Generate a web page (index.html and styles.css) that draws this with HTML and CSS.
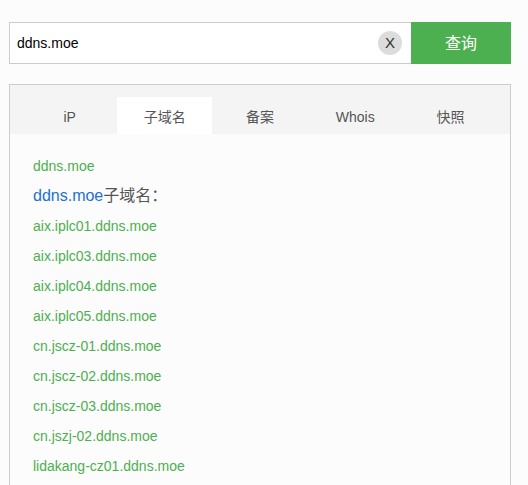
FILE: index.html
```html
<!DOCTYPE html>
<html lang="zh-CN">
<head>
<meta charset="utf-8">
<title>子域名查询</title>
<link rel="stylesheet" href="styles.css">
</head>
<body>
<div class="page">
  <form class="search">
    <div class="field">
      <input class="field-input" type="text" value="ddns.moe">
      <span class="clear">X</span>
    </div>
    <button class="submit" type="button">查询</button>
  </form>
  <div class="panel">
    <ul class="tabs">
      <li class="tab">iP</li>
      <li class="tab active">子域名</li>
      <li class="tab">备案</li>
      <li class="tab">Whois</li>
      <li class="tab">快照</li>
    </ul>
    <div class="content">
      <a class="link">ddns.moe</a>
      <div class="title"><span class="title-domain">ddns.moe</span>子域名：</div>
      <a class="link">aix.iplc01.ddns.moe</a>
      <a class="link">aix.iplc03.ddns.moe</a>
      <a class="link">aix.iplc04.ddns.moe</a>
      <a class="link">aix.iplc05.ddns.moe</a>
      <a class="link">cn.jscz-01.ddns.moe</a>
      <a class="link">cn.jscz-02.ddns.moe</a>
      <a class="link">cn.jscz-03.ddns.moe</a>
      <a class="link">cn.jszj-02.ddns.moe</a>
      <a class="link">lidakang-cz01.ddns.moe</a>
    </div>
  </div>
</div>
</body>
</html>
```

FILE: styles.css
```css
html, body {
  margin: 0;
  padding: 0;
  background: #fcfcfc;
  font-family: "Liberation Sans", "Noto Sans CJK SC", sans-serif;
  overflow: hidden;
}
.page {
  width: 502px;
  padding: 22px 0 0 9px;
}
.search {
  display: flex;
  height: 42px;
  margin: 0;
}
.field {
  flex: 1;
  display: flex;
  align-items: center;
  background: #fff;
  border: 1px solid #ccc;
  border-right: none;
  box-sizing: border-box;
  height: 42px;
}
.field-input {
  flex: 1;
  border: none;
  outline: none;
  background: transparent;
  font-family: "Liberation Sans", "Noto Sans CJK SC", sans-serif;
  font-size: 14px;
  color: #000;
  padding: 0 0 0 7px;
  height: 40px;
  min-width: 0;
}
.clear {
  width: 24px;
  height: 24px;
  border-radius: 50%;
  background: #dcdcdc;
  color: #333;
  font-size: 15px;
  line-height: 24px;
  text-align: center;
  margin-right: 9px;
}
.submit {
  width: 100px;
  height: 42px;
  border: none;
  background: #4caf50;
  color: #fff;
  font-family: "Noto Sans CJK SC", sans-serif;
  font-size: 16px;
  line-height: 40px;
  padding: 0 0 2px;
}
.panel {
  margin-top: 20px;
  border: 1px solid #ccc;
  border-bottom: none;
  background: #fcfcfc;
  height: 420px;
}
.tabs {
  display: flex;
  list-style: none;
  margin: 0;
  padding: 12px 12px 0;
  background: #f4f4f4;
}
.tab {
  flex: 1;
  height: 37px;
  box-sizing: border-box;
  padding-top: 5px;
  line-height: 31px;
  text-align: center;
  font-size: 14px;
  color: #555;
}
.tab.active {
  background: #fff;
}
.content {
  padding: 17px 0 0 23px;
}
.link {
  display: block;
  font-size: 14px;
  line-height: 30px;
  color: #4caf50;
}
.title {
  font-size: 16px;
  line-height: 30px;
  color: #555;
}
.title-domain {
  color: #2271cf;
}
```
